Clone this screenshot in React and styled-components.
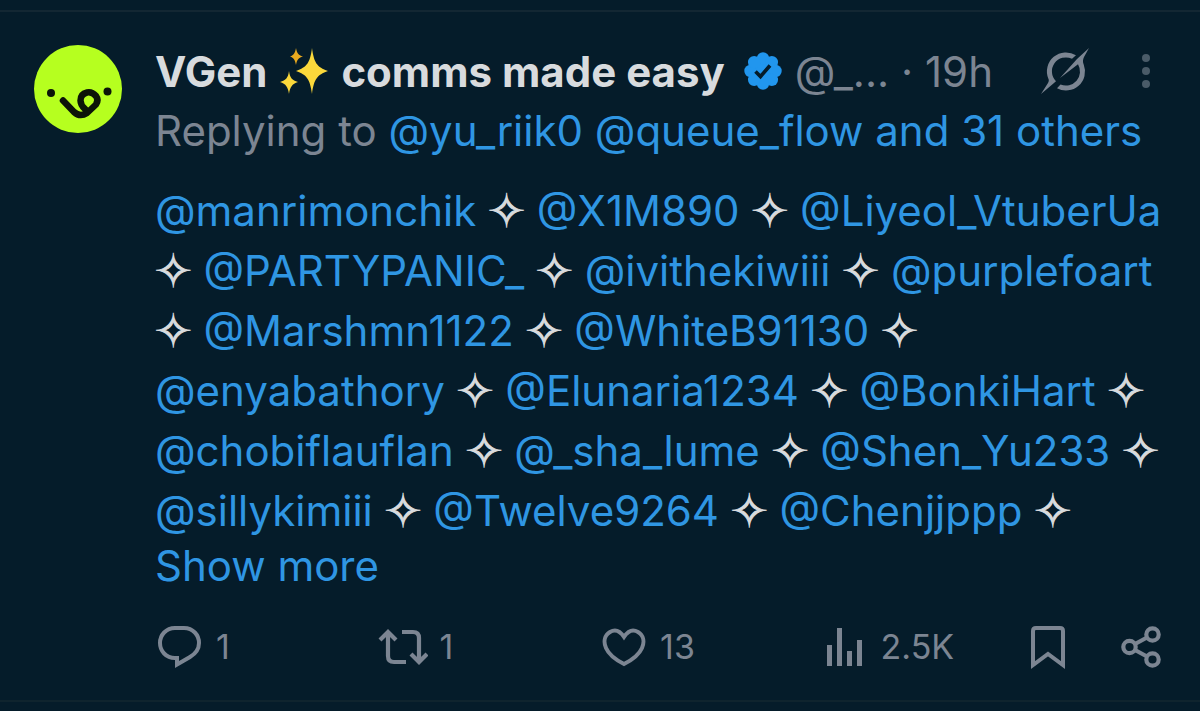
import React, { useState } from 'react';
import styled, { createGlobalStyle } from 'styled-components';

const GlobalStyle = createGlobalStyle`
* {
box-sizing: border-box;
}

body {
margin: 0;
background: #051c2a;
font-family: Inter, 'Liberation Sans', sans-serif;
}
`;

const Feed = styled.main`
padding: 10px 0 8px;
`;

const Tweet = styled.article`
display: flex;
gap: 33px;
padding: 29px 34px 31px;
border-top: 2px solid #132733;
border-bottom: 2px solid #0f242e;
`;

const Avatar = styled.a`
flex: none;
width: 88px;
height: 88px;
margin-top: 4px;
`;

const Content = styled.div`
flex: 1;
min-width: 0;
`;

const Header = styled.header`
display: flex;
align-items: center;
height: 60px;
padding-right: 16px;
white-space: nowrap;
color: #7c8592;
font-size: 42px;
`;

const Name = styled.h1`
display: flex;
align-items: center;
gap: 12px;
margin: 0 19px 0 0;
color: #d8dbde;
font-size: 42px;
font-weight: 700;
`;

const Handle = styled.span`
margin-left: 13px;
`;

const Time = styled.span`
margin-left: 12px;
`;

const IconButton = styled.button`
display: flex;
align-items: center;
gap: ${props => props.$gap || 0}px;
padding: 0;
border: 0;
background: none;
color: ${props => props.$dim ? '#4a5b68' : '#7c8592'};
font-family: inherit;
font-size: 34px;
line-height: 44px;
cursor: pointer;
`;

const HeaderButtons = styled.div`
display: flex;
align-items: center;
gap: 52px;
margin-left: auto;
`;

const Replying = styled.p`
margin: 0;
color: #7c8592;
font-size: 42px;
line-height: 60px;
white-space: nowrap;
`;

const Link = styled.a`
color: #2f96e3;
text-decoration: none;
`;

const Mentions = styled.div`
margin-top: 20px;
color: #d8dbde;
font-size: 42px;
line-height: 60px;
white-space: nowrap;
`;

const Line = styled.p`
display: flex;
gap: 12px;
height: 60px;
margin: 0;
`;

const Star = styled.span`
margin: 0 -1px;
font-family: 'DejaVu Sans', sans-serif;
font-size: 46px;
-webkit-text-stroke: 1px currentColor;
`;

const ShowMore = styled.button`
display: block;
padding: 0;
border: 0;
background: none;
color: #2f96e3;
font-family: inherit;
font-size: 42px;
line-height: 50px;
cursor: pointer;
`;

const Actions = styled.footer`
display: grid;
grid-template-columns: 44fr 45fr 45fr 41fr 18fr auto;
align-items: center;
justify-items: start;
margin-top: 34px;
padding: 0 5px 0 3px;
`;

const STAR = '✧';

const lines = [
    ['@manrimonchik', STAR, '@X1M890', STAR, '@Liyeol_VtuberUa'],
    [STAR, '@PARTYPANIC_', STAR, '@ivithekiwiii', STAR, '@purplefoart'],
    [STAR, '@Marshmn1122', STAR, '@WhiteB91130', STAR],
    ['@enyabathory', STAR, '@Elunaria1234', STAR, '@BonkiHart', STAR],
    ['@chobiflauflan', STAR, '@_sha_lume', STAR, '@Shen_Yu233', STAR],
    ['@sillykimiii', STAR, '@Twelve9264', STAR, '@Chenjjppp', STAR],
];

const Face = () => (
    <svg width="88" height="88" viewBox="0 0 88 88" fill="none">
        <circle cx="44" cy="44" r="44" fill="#b6ff1f" />
        <circle cx="17" cy="48" r="4" fill="#0c1408" />
        <circle cx="73.500" cy="46.500" r="4" fill="#0c1408" />
        <path d="M29 55.500L40 67Q46 72.500 53 68L62 59.500Q65 55 62 51Q58 46.500 53 47.500Q46.500 49 46.500 55.500Q46.500 60 51 64" stroke="#0c1408" strokeWidth="6.500" strokeLinecap="round" strokeLinejoin="round" />
    </svg>
);

const Sparkles = () => (
    <svg width="50" height="50" viewBox="0 0 50 50">
        <path d="M33 2C35 17 38 21 49 25C38 29 35 33 33 48C31 33 28 29 17 25C28 21 31 17 33 2Z" fill="#fbd83b" />
        <path d="M10 25C11 32 13 34 19 36C13 38 11 41 10 48C9 41 7 38 1 36C7 34 9 32 10 25Z" fill="#fbd83b" />
        <path d="M17 2C18 7 19 9 24 10.500C19 12 18 14 17 19C16 14 15 12 11 10.500C15 9 16 7 17 2Z" fill="#e9a91f" />
    </svg>
);

const Verified = () => (
    <svg width="38" height="38" viewBox="0 0 38 38">
        <g fill="#2196ee">
            <circle cx="19" cy="19" r="15" />
            {[0, 45, 90, 135, 180, 225, 270, 315].map(a => (
                <circle key={a} cx="19" cy="6.500" r="6.200" transform={`rotate(${a} 19 19)`} />
            ))}
        </g>
        <path d="M11.500 19.500L16.500 24.500L26 13.500" fill="none" stroke="#051c2a" strokeWidth="3.600" />
    </svg>
);

const Grok = () => (
    <svg width="50" height="48" viewBox="0 0 50 48" fill="currentColor">
        <path d="M36 8.300A19 19 0 0 0 8.300 31.500C9 33 9 34 8 36L1 47L14 36L16 34.300A14 14 0 0 1 32 11.800Z" />
        <path d="M49 1L37 12L20 31L38 17.300A14 14 0 0 1 20.500 37.400L17 41.200A19 19 0 0 0 43.700 17.500C42.700 15 42.700 12.500 44 10Z" />
    </svg>
);

const Dots = () => (
    <svg width="8" height="34" viewBox="0 0 8 34" fill="currentColor">
        <circle cx="4" cy="4" r="4" />
        <circle cx="4" cy="17" r="4" />
        <circle cx="4" cy="30" r="4" />
    </svg>
);

const ReplyIcon = () => (
    <svg width="44" height="44" viewBox="0 0 44 44" fill="none" stroke="currentColor" strokeWidth="4">
        <path d="M17 3H26C35 3 41 10 41 18C41 25 37 29 32 32L19 39.500V33H17C8 33 2 26 2 18C2 10 8 3 17 3Z" />
    </svg>
);

const RepostIcon = () => (
    <svg width="50" height="44" viewBox="0 0 50 44" fill="none" stroke="currentColor" strokeWidth="4.200">
        <path d="M2 15L10 7L18 15M10 8V31C10 35 12 37 16 37H28" />
        <path d="M24 7H35C39 7 41 9 41 13V36M33 29L41 37L49 29" />
    </svg>
);

const HeartIcon = () => (
    <svg width="44" height="44" viewBox="0 0 44 44" fill="none" stroke="currentColor" strokeWidth="4">
        <path d="M22 12C18 6 13 4 8 7C3 10 1 16 4 23C7 30 14 35 22 39C30 35 37 30 40 23C43 16 41 10 36 7C31 4 26 6 22 12Z" />
    </svg>
);

const ViewsIcon = () => (
    <svg width="36" height="40" viewBox="0 0 36 40" fill="currentColor">
        <path d="M0 18H5V39H0ZM10 1H15V39H10ZM20 24H25V39H20ZM30 13H35V39H30Z" />
    </svg>
);

const BookmarkIcon = () => (
    <svg width="34" height="44" viewBox="0 0 34 44" fill="none" stroke="currentColor" strokeWidth="4">
        <path d="M2 40V6Q2 3 5 3H29Q32 3 32 6V40L17 29Z" />
    </svg>
);

const ShareIcon = () => (
    <svg width="40" height="42" viewBox="0 0 40 42" fill="none" stroke="currentColor" strokeWidth="4.200">
        <circle cx="8.500" cy="21" r="6.200" />
        <circle cx="31.500" cy="8.500" r="6.200" />
        <circle cx="31.500" cy="33.500" r="6.200" />
        <path d="M14 18L26 11.500M14 24L26 30.500" />
    </svg>
);

const App = () => {

    const [liked, setLiked] = useState(false);

    return (
        <Feed>
            <GlobalStyle />
            <Tweet>
                <Avatar href="#" aria-label="VGen"><Face /></Avatar>
                <Content>
                    <Header>
                        <Name>VGen <Sparkles /> comms made easy</Name>
                        <Verified />
                        <Handle>@_...</Handle>
                        <Time>· 19h</Time>
                        <HeaderButtons>
                            <IconButton aria-label="Grok"><Grok /></IconButton>
                            <IconButton $dim aria-label="More"><Dots /></IconButton>
                        </HeaderButtons>
                    </Header>
                    <Replying>
                        Replying to <Link href="#">@yu_riik0</Link> <Link href="#">@queue_flow</Link> <Link href="#">and 31 others</Link>
                    </Replying>
                    <Mentions>
                        {lines.map((line, i) => (
                            <Line key={i}>
                                {line.map((part, j) => (
                                    part === STAR ? <Star key={j}>{part}</Star> : <Link key={j} href="#">{part}</Link>
                                ))}
                            </Line>
                        ))}
                    </Mentions>
                    <ShowMore>Show more</ShowMore>
                    <Actions>
                        <IconButton $gap={14} aria-label="Reply"><ReplyIcon />1</IconButton>
                        <IconButton $gap={12} aria-label="Repost"><RepostIcon />1</IconButton>
                        <IconButton $gap={14} aria-label="Like" aria-pressed={liked} onClick={() => setLiked(!liked)}><HeartIcon />13</IconButton>
                        <IconButton $gap={18} aria-label="Views"><ViewsIcon />2.5K</IconButton>
                        <IconButton aria-label="Bookmark"><BookmarkIcon /></IconButton>
                        <IconButton aria-label="Share"><ShareIcon /></IconButton>
                    </Actions>
                </Content>
            </Tweet>
        </Feed>
    );
}

export default App;
